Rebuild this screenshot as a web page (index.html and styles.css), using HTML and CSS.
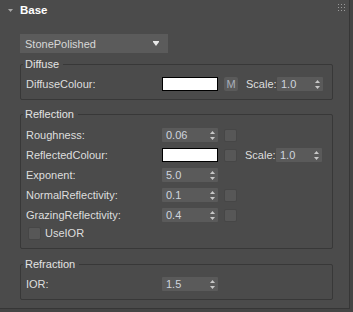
FILE: index.html
```html
<!DOCTYPE html>
<html>
<head>
    <title>Base Material</title>
    <link rel="stylesheet" href="styles.css">
</head>
<body>

    <div class="rollout">
        <div class="rollout-head">
            <svg class="fold" width="5" height="3" viewBox="0 0 5 3"><polygon points="0,0 5,0 2.5,3" fill="#a8a8a8"/></svg>
            <span class="title">Base</span>
            <svg class="grip" width="7" height="7" viewBox="0 0 7 7">
                <g fill="#9a9a9a">
                    <rect x="0" y="0" width="1" height="1"/><rect x="3" y="0" width="1" height="1"/><rect x="6" y="0" width="1" height="1"/>
                    <rect x="0" y="3" width="1" height="1"/><rect x="3" y="3" width="1" height="1"/><rect x="6" y="3" width="1" height="1"/>
                    <rect x="0" y="6" width="1" height="1"/><rect x="3" y="6" width="1" height="1"/><rect x="6" y="6" width="1" height="1"/>
                </g>
            </svg>
        </div>

        <div class="rollout-body">
            <div class="dropdown">
                <span>StonePolished</span>
                <svg width="6" height="5" viewBox="0 0 6 5"><rect x="0" y="0" width="6" height="1" fill="#e8e8e8"/><polygon points="0,1 6,1 3,5" fill="#e8e8e8"/></svg>
            </div>

            <fieldset class="group diffuse">
                <legend>Diffuse</legend>
                <div class="row">
                    <span class="label">DiffuseColour:</span>
                    <span class="swatch"></span>
                    <span class="mbtn">M</span>
                    <span class="scale-label">Scale:</span>
                    <span class="spinner short">1.0<svg class="arrows" width="5" height="9" viewBox="0 0 5 9"><polygon points="2.5,0 5,3 0,3" fill="#c8c8c8"/><polygon points="0,6 5,6 2.5,9" fill="#c8c8c8"/></svg></span>
                </div>
            </fieldset>

            <fieldset class="group reflection">
                <legend>Reflection</legend>
                <div class="row">
                    <span class="label">Roughness:</span>
                    <span class="spinner">0.06<svg class="arrows" width="5" height="9" viewBox="0 0 5 9"><polygon points="2.5,0 5,3 0,3" fill="#c8c8c8"/><polygon points="0,6 5,6 2.5,9" fill="#c8c8c8"/></svg></span>
                    <span class="check"></span>
                </div>
                <div class="row">
                    <span class="label">ReflectedColour:</span>
                    <span class="swatch"></span>
                    <span class="check"></span>
                    <span class="scale-label">Scale:</span>
                    <span class="spinner short">1.0<svg class="arrows" width="5" height="9" viewBox="0 0 5 9"><polygon points="2.5,0 5,3 0,3" fill="#c8c8c8"/><polygon points="0,6 5,6 2.5,9" fill="#c8c8c8"/></svg></span>
                </div>
                <div class="row">
                    <span class="label">Exponent:</span>
                    <span class="spinner">5.0<svg class="arrows" width="5" height="9" viewBox="0 0 5 9"><polygon points="2.5,0 5,3 0,3" fill="#c8c8c8"/><polygon points="0,6 5,6 2.5,9" fill="#c8c8c8"/></svg></span>
                </div>
                <div class="row">
                    <span class="label">NormalReflectivity:</span>
                    <span class="spinner">0.1<svg class="arrows" width="5" height="9" viewBox="0 0 5 9"><polygon points="2.5,0 5,3 0,3" fill="#c8c8c8"/><polygon points="0,6 5,6 2.5,9" fill="#c8c8c8"/></svg></span>
                    <span class="check"></span>
                </div>
                <div class="row">
                    <span class="label">GrazingReflectivity:</span>
                    <span class="spinner">0.4<svg class="arrows" width="5" height="9" viewBox="0 0 5 9"><polygon points="2.5,0 5,3 0,3" fill="#c8c8c8"/><polygon points="0,6 5,6 2.5,9" fill="#c8c8c8"/></svg></span>
                    <span class="check"></span>
                </div>
                <div class="row use-ior">
                    <span class="check"></span>
                    <span>UseIOR</span>
                </div>
            </fieldset>

            <fieldset class="group refraction">
                <legend>Refraction</legend>
                <div class="row">
                    <span class="label">IOR:</span>
                    <span class="spinner">1.5<svg class="arrows" width="5" height="9" viewBox="0 0 5 9"><polygon points="2.5,0 5,3 0,3" fill="#c8c8c8"/><polygon points="0,6 5,6 2.5,9" fill="#c8c8c8"/></svg></span>
                </div>
            </fieldset>
        </div>
    </div>

</body>
</html>
```

FILE: styles.css
```css
body {
    margin: 0;
    background-color: #444444;
    font-family: "Liberation Sans", Arial, sans-serif;
    font-size: 11px;
    color: #dedede;
}

.rollout {
    width: 349px;
    height: 308px;
    background-color: #4b4b4b;
    border-right: 1px solid #363636;
    border-bottom: 1px solid #363636;
}

.rollout-head {
    display: flex;
    align-items: center;
    height: 24px;
    padding-left: 8px;
    padding-right: 4px;
}

.rollout-head .fold {
    margin-top: -3px;
}

.rollout-head .title {
    margin-left: 7px;
    margin-top: -4px;
    font-weight: bold;
    font-size: 11.5px;
    color: #ffffff;
}

.rollout-head .grip {
    margin-left: auto;
    margin-top: -10px;
}

.rollout-body {
    padding: 10px 0 0 20px;
}

.dropdown {
    display: flex;
    align-items: center;
    justify-content: space-between;
    width: 148px;
    height: 19px;
    padding: 0 9px 0 5px;
    box-sizing: border-box;
    background-color: #5b5b5b;
    color: #d8d8d8;
}

.group {
    width: 313px;
    box-sizing: border-box;
    margin: 0;
    padding: 3px 0 5px 5px;
    border: 1px solid #383838;
    border-radius: 2px;
    min-width: 0;
}

.group legend {
    margin-left: -3px;
    padding: 0 4px 0 2px;
    line-height: 13px;
    color: #e4e4e4;
}

.diffuse {
    margin-top: 5px;
}

.reflection {
    margin-top: 8px;
    padding-top: 4px;
}

.refraction {
    margin-top: 9px;
}

.row {
    display: flex;
    align-items: center;
    height: 20px;
}

.label {
    width: 136px;
    flex-shrink: 0;
}

.spinner {
    display: flex;
    align-items: center;
    justify-content: space-between;
    width: 56px;
    height: 14px;
    padding: 0 3px 0 4px;
    box-sizing: border-box;
    background-color: #5a5a5a;
    border-radius: 1px;
    color: #cfd5de;
}

.spinner.short {
    width: 46px;
}

.swatch {
    width: 56px;
    height: 14px;
    box-sizing: border-box;
    background-color: #ffffff;
    border: 1px solid #000000;
}

.check {
    width: 13px;
    height: 13px;
    margin-left: 6px;
    box-sizing: border-box;
    background-color: #575757;
    border: 1px solid #464646;
    border-radius: 2px;
}

.mbtn {
    width: 14px;
    height: 14px;
    margin-left: 6px;
    display: flex;
    align-items: center;
    justify-content: center;
    background-color: #5a5a5a;
    border-radius: 2px;
    color: #a9b0bc;
    font-size: 11px;
}

.scale-label {
    margin-left: 8px;
    width: 31px;
}

.use-ior {
    margin-top: -2px;
}

.use-ior .check {
    margin-left: 2px;
    margin-right: 4px;
}
```
